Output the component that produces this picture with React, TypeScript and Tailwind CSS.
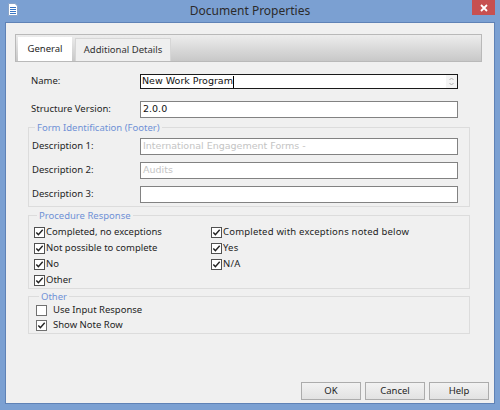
import React from 'react'

const ui = "font-['Segoe_UI','Noto_Sans',sans-serif]"
const mono = "font-['DejaVu_Sans','Verdana',sans-serif]"

function Check({ checked, light }: { checked: boolean; light?: boolean }) {
  return (
    <svg width="11" height="11" viewBox="0 0 11 11" className="shrink-0">
      <rect x="0.5" y="0.5" width="10" height="10" fill="#fff" stroke={light ? '#707070' : '#505050'} />
      {checked && <path d="M2.3 5.4 L4.4 7.6 L8.7 2.8" fill="none" stroke="#222" strokeWidth="1.4" />}
    </svg>
  )
}

function Field({ label, value, disabled }: { label: string; value?: string; disabled?: boolean }) {
  return (
    <div className="flex items-center h-[17px]">
      <span className="w-[108px]">{label}</span>
      <div className={`w-[318px] h-[17px] bg-white border border-[#828282] flex items-center px-[2px] ${mono} text-[9.5px] ${disabled ? 'text-[#c4c4c4]' : 'text-[#111]'}`}>
        {value}
      </div>
    </div>
  )
}

const procedure: [string, string | null][] = [
  ['Completed, no exceptions', 'Completed with exceptions noted below'],
  ['Not possible to complete', 'Yes'],
  ['No', 'N/A'],
  ['Other', null],
]

export default function App() {
  return (
    <div className={`w-[500px] h-[410px] bg-[#7ba0d2] flex flex-col ${ui} text-[9.5px] text-[#1e1e1e]`}>
      {/* title bar */}
      <div className="h-[22px] grid grid-cols-[60px_1fr_60px] items-start">
        <div className="pl-[8px] pt-[3px]">
          <svg width="10" height="13" viewBox="0 0 10 13">
            <path d="M0.5 0.5 H7 L9.5 3 V12.5 H0.5 Z" fill="#fff" stroke="#8aa4c8" />
            <path d="M2 4.5 H8 M2 6.5 H8 M2 8.5 H8 M2 10.5 H8" stroke="#3a76c4" strokeWidth="1.2" />
          </svg>
        </div>
        <div className="text-center text-[12px] leading-[22px] text-[#2b2b2b]">Document Properties</div>
        <div className="flex justify-end pr-[5px]">
          <div className="w-[23px] h-[15px] bg-[#c75050] flex items-center justify-center">
            <svg width="8" height="8" viewBox="0 0 8 8">
              <path d="M1 1 L7 7 M7 1 L1 7" stroke="#fff" strokeWidth="1.8" />
            </svg>
          </div>
        </div>
      </div>

      {/* client area */}
      <div className="flex-1 mx-[5px] mb-[6px] bg-[#f0f0f0] border border-[#5f82b6] flex flex-col pt-[11px]">
        {/* tabs */}
        <div className="ml-[9px] w-[467px] h-[28px] border border-[#b9b9b9] bg-gradient-to-b from-[#ededed] to-[#c8c8c8] flex items-end pl-[2px] gap-[3px]">
          <div className="w-[54px] h-[24px] bg-white flex items-center justify-center">General</div>
          <div className="w-[96px] h-[23px] bg-[#efefef] border border-[#d6d6d6] border-b-0 flex items-center justify-center text-[#333]">
            Additional Details
          </div>
        </div>

        <div className="pl-[25px] mt-[12px] flex items-center h-[15px]">
          <span className="w-[109px]">Name:</span>
          <div className={`w-[318px] h-[15px] bg-white border border-[#1a1a1a] flex items-center pl-[1px] ${mono} text-[9.5px] text-[#111]`}>
            <span>New Work Program</span>
            <span className="w-px h-[12px] bg-black" />
            <span className="ml-auto w-[11px] h-full bg-[#f4f4f4] flex items-center justify-center">
              <svg width="7" height="11" viewBox="0 0 7 11">
                <path d="M1.5 4 L3.5 2 L5.5 4 M1.5 7 L3.5 9 L5.5 7" fill="none" stroke="#b0b0b0" />
              </svg>
            </span>
          </div>
        </div>

        <div className="pl-[25px] mt-[12px] flex items-center h-[17px]">
          <span className="w-[109px]">Structure Version:</span>
          <div className={`w-[318px] h-[17px] bg-white border border-[#828282] flex items-center px-[2px] ${mono} text-[9.5px] text-[#111]`}>
            2.0.0
          </div>
        </div>

        <fieldset className="ml-[22px] w-[442px] mt-[3px] border border-[#dcdcdc] pl-[3px] pt-[4px] pb-[3px] flex flex-col gap-[7px]">
          <legend className="ml-[3px] px-[2px] leading-[13px] text-[#6f90d6]">Form Identification (Footer)</legend>
          <Field label="Description 1:" value="International Engagement Forms -" disabled />
          <Field label="Description 2:" value="Audits" disabled />
          <Field label="Description 3:" />
        </fieldset>

        <fieldset className="ml-[22px] w-[442px] mt-[2px] border border-[#dcdcdc] pl-[5px] pt-[2px] grid grid-cols-[177px_1fr]">
          <legend className="ml-[3px] px-[2px] leading-[13px] text-[#6f90d6]">Procedure Response</legend>
          {procedure.map(([a, b]) => (
            <React.Fragment key={a}>
              <div className="h-[16px] flex items-center gap-[1px]">
                <Check checked />
                <span>{a}</span>
              </div>
              <div className="h-[16px] flex items-center gap-[1px]">
                {b && (
                  <>
                    <Check checked />
                    <span className="tracking-[0.2px]">{b}</span>
                  </>
                )}
              </div>
            </React.Fragment>
          ))}
        </fieldset>

        <fieldset className="ml-[22px] w-[442px] mt-[1px] border border-[#dcdcdc] pl-[7px] flex flex-col">
          <legend className="ml-[3px] px-[2px] leading-[13px] text-[#6f90d6]">Other</legend>
          <div className="h-[15px] flex items-center gap-[6px]">
            <Check checked={false} light />
            <span>Use Input Response</span>
          </div>
          <div className="h-[15px] flex items-center gap-[6px]">
            <Check checked light />
            <span>Show Note Row</span>
          </div>
        </fieldset>

        <div className="mt-auto mb-[3px] mr-[5px] flex justify-end gap-[4px]">
          {['OK', 'Cancel', 'Help'].map(b => (
            <button
              key={b}
              className="w-[60px] h-[18px] border border-[#acacac] bg-gradient-to-b from-[#f2f2f2] to-[#e2e2e2] flex items-center justify-center"
            >
              {b}
            </button>
          ))}
        </div>
      </div>
    </div>
  )
}
